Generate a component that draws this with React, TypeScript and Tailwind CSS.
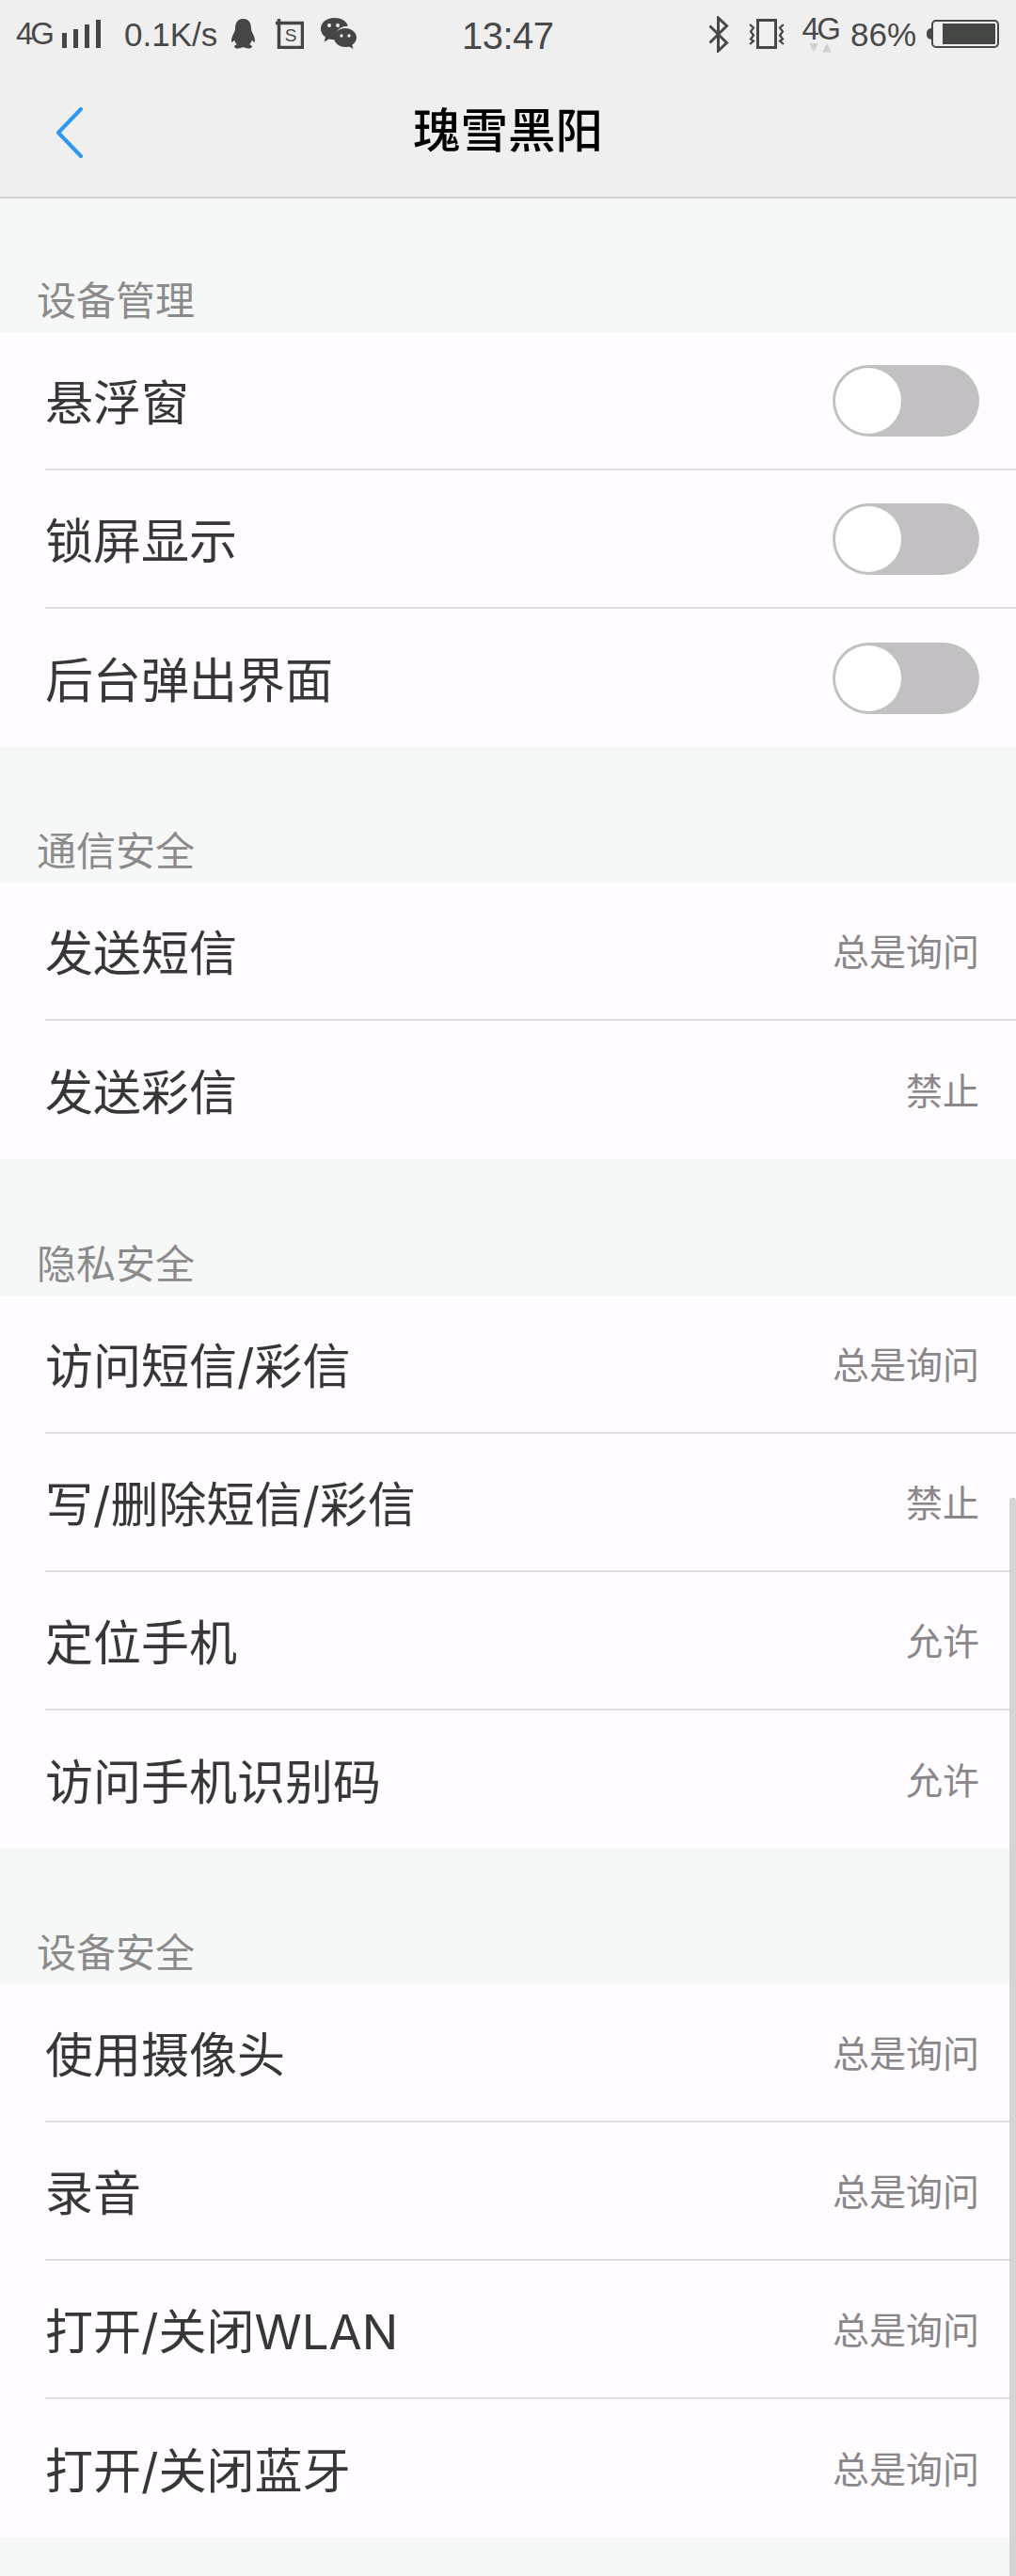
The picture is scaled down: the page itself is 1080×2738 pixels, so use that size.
import { ReactNode } from "react";

type Row = { label: string; value?: string };
type Section = { title: string; head: string; rows: Row[] };

const sections: Section[] = [
  {
    title: "设备管理",
    head: "h-[142px]",
    rows: [{ label: "悬浮窗" }, { label: "锁屏显示" }, { label: "后台弹出界面" }],
  },
  {
    title: "通信安全",
    head: "h-[144px]",
    rows: [
      { label: "发送短信", value: "总是询问" },
      { label: "发送彩信", value: "禁止" },
    ],
  },
  {
    title: "隐私安全",
    head: "h-[145px]",
    rows: [
      { label: "访问短信/彩信", value: "总是询问" },
      { label: "写/删除短信/彩信", value: "禁止" },
      { label: "定位手机", value: "允许" },
      { label: "访问手机识别码", value: "允许" },
    ],
  },
  {
    title: "设备安全",
    head: "h-[144px]",
    rows: [
      { label: "使用摄像头", value: "总是询问" },
      { label: "录音", value: "总是询问" },
      { label: "打开/关闭WLAN", value: "总是询问" },
      { label: "打开/关闭蓝牙", value: "总是询问" },
    ],
  },
];

const Toggle = () => (
  <div className="flex h-[76px] w-[156px] items-center rounded-full bg-[#c2c0c2] pl-[3px]">
    <div className="h-[70px] w-[70px] rounded-full bg-white" />
  </div>
);

const Icon = ({ w, h, box, className, children }: { w: number; h: number; box: string; className?: string; children: ReactNode }) => (
  <svg width={w} height={h} viewBox={box} className={"shrink-0 " + (className ?? "")}>
    {children}
  </svg>
);

const StatusBar = () => (
  <div className="flex h-[72px] items-center whitespace-nowrap text-[#484848]">
    <span className="ml-[17px] w-[49px] text-[33px] tracking-[-3px]">4G</span>
    <Icon w={41} h={30} box="0 0 41 30">
      <rect x="0" y="14" width="5" height="16" fill="#444644" />
      <rect x="12" y="10" width="5" height="20" fill="#444644" />
      <rect x="24" y="5" width="5" height="25" fill="#444644" />
      <rect x="36" y="0" width="5" height="30" fill="#444644" />
    </Icon>
    <span className="ml-[25px] mt-[3px] w-[100px] text-[35px]">0.1K/s</span>
    {/* qq */}
    <Icon w={27} h={32} box="0 0 28 34" className="ml-[13px]">
      <path
        d="M14 0C7.500 0 5 5 5 11c0 2-.5 3-1.500 5C1.500 20 0 24 1 26c.8 1 2-.5 3-2 .5 2 1.500 3.500 3 5-2 .8-3 1.500-3 2.500C4 33 8 34 11 33c1-.5 2-.8 3-.8s2 .3 3 .8c3 1 7 0 7-1.500 0-1-1-1.700-3-2.500 1.500-1.500 2.500-3 3-5 1 1.500 2.200 3 3 2 1-2-.5-6-2.500-10-1-2-1.500-3-1.500-5C23 5 20.500 0 14 0z"
        fill="#444644"
      />
    </Icon>
    {/* note with S */}
    <Icon w={30} h={32} box="0 0 30 32" className="ml-[21px]">
      <path d="M3.500 0v30.500h25V4.500H0" fill="none" stroke="#444644" strokeWidth="3.500" />
      <text x="16" y="24" textAnchor="middle" fontSize="19" fill="#444644" fontFamily="Liberation Sans">
        S
      </text>
    </Icon>
    {/* wechat */}
    <Icon w={38} h={34} box="0 0 38 34" className="ml-[18px]">
      <path d="M14 0C6 0 0 5 0 11.500c0 4 2 7 5 9l-1.500 5 5.500-3c1.500.5 3.500.8 5 .8 1 0 1.300 0 2-.1-.4-1.200-.6-2.300-.6-3.500 0-6.500 6-11 13.500-11-1.500-5.500-7.500-8.700-14.400-8.700z" fill="#444644" />
      <circle cx="9" cy="8" r="2" fill="#efefef" />
      <circle cx="18" cy="8" r="2" fill="#efefef" />
      <path d="M26 11c-6.500 0-12 4.500-12 10s5.500 10 12 10c1.300 0 2.700-.2 4-.6l4.500 2.600-1.200-4.200C36 26.800 38 24 38 21c0-5.500-5.500-10-12-10z" fill="#444644" />
      <circle cx="22" cy="19" r="1.700" fill="#efefef" />
      <circle cx="30" cy="19" r="1.700" fill="#efefef" />
    </Icon>
    <span className="ml-[112px] mt-[3px] w-[96px] text-[40px] tracking-[-0.5px]">13:47</span>
    {/* bluetooth */}
    <Icon w={22} h={39} box="0 0 22 39" className="ml-[166px]">
      <path d="M1.500 10.500l18 18L10.500 37V2l9 8.500-18 18" fill="none" stroke="#484848" strokeWidth="3" />
    </Icon>
    {/* vibrate */}
    <Icon w={38} h={32} box="0 0 38 32" className="ml-[21px]">
      <rect x="9.500" y="1.500" width="19" height="29" fill="#f0f0f0" stroke="#484848" strokeWidth="3" />
      <path d="M1 6l4 3.500-3 4 3 4-3 4 3 2-4 3.500M37 6l-4 3.500 3 4-3 4 3 4-3 2 4 3.500" fill="none" stroke="#484848" strokeWidth="2.200" />
    </Icon>
    <div className="ml-[19px] flex w-[38px] flex-col items-center">
      <span className="text-[33px] leading-[28px] tracking-[-2.500px]">4G</span>
      <Icon w={24} h={10} box="0 0 24 10" className="mt-[1px]">
        <path d="M0 0h10l-5 9.500zM14 9.500h10l-5-9.500z" fill="#d0d0d0" />
      </Icon>
    </div>
    <span className="ml-[13px] mt-[2px] w-[71px] text-[35px]">86%</span>
    <div className="ml-[10px] h-[12px] w-[5px] rounded-l-full bg-[#484848]" />
    <div className="flex h-[30px] w-[72px] items-center justify-end rounded-[5px] border-2 border-[#484848] px-[2px] py-[2px]">
      <div className="h-full w-[56px] bg-[#444644]" />
    </div>
  </div>
);

const NavBar = () => (
  <div className="relative flex h-[139px] items-center justify-center border-b-2 border-[#cfcfcf]">
    <svg width="28" height="54" viewBox="0 0 28 54" className="absolute left-[60px] top-[42px]">
      <path d="M26 2L2 27l24 25" fill="none" stroke="#2e96f5" strokeWidth="4" strokeLinecap="round" strokeLinejoin="round" />
    </svg>
    <span className="text-[50.5px] font-medium leading-none text-black">瑰雪黑阳</span>
  </div>
);

export default function App() {
  return (
    <div className="relative min-h-[2738px] overflow-hidden bg-[#f6f7f7] font-['Liberation_Sans','Noto_Sans_CJK_SC',sans-serif]">
      <div className="bg-[#efefef]">
        <StatusBar />
        <NavBar />
      </div>
      {sections.map((s) => (
        <div key={s.title}>
          <div className={"flex items-end pb-[8px] pl-[39px] text-[42px] leading-[48px] text-[#8b8b8b] " + s.head}>{s.title}</div>
          <div className="bg-[#fefcfe]">
            {s.rows.map((r, i) => (
              <div key={r.label} className={"ml-[48px] flex h-[147px] items-center justify-between pr-[39px] " + (i < s.rows.length - 1 ? "border-b-2 border-[#e2dce2]" : "")}>
                <span className="pt-[8px] font-['Inter','Noto_Sans_CJK_SC',sans-serif] text-[51px] text-[#383638]">{r.label}</span>
                {r.value ? <span className="pt-[6px] text-[39px] text-[#8a868a]">{r.value}</span> : <Toggle />}
              </div>
            ))}
          </div>
        </div>
      ))}
      {/* scrollbar */}
      <div className="absolute bottom-0 right-0 top-[1592px] w-[7px] rounded-t-[3px] bg-[#d4d4d4]" />
    </div>
  );
}
